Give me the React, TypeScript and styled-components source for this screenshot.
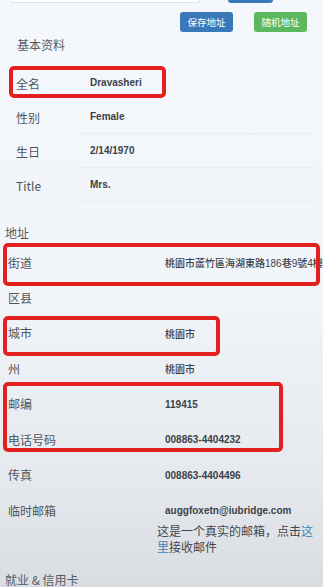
import React from "react";
import styled, { createGlobalStyle } from "styled-components";

const Global = createGlobalStyle`
  html, body { margin: 0; padding: 0; }
  body {
    width: 323px;
    height: 587px;
    overflow: hidden;
    font-family: "Liberation Sans", "Noto Sans CJK SC", sans-serif;
    background: linear-gradient(180deg, #f4f8fd 0%, #f1f5fa 50%, #e6eaee 80%, #d9dde2 100%);
  }
`;

const Page = styled.div`
  position: relative;
  width: 323px;
  height: 587px;
  overflow: hidden;
`;

const TopBar = styled.div`
  display: flex;
  align-items: flex-end;
  height: 3px;
  padding-left: 10px;
`;

const SearchInput = styled.div`
  width: 190px;
  height: 3px;
  background: #ffffff;
  border: 1px solid #dde3ea;
  border-top: none;
  border-radius: 0 0 3px 3px;
  box-sizing: border-box;
`;

const TopButton = styled.div`
  margin-left: 28px;
  width: 45px;
  height: 3px;
  background: #3a79b7;
  border-radius: 0 0 3px 3px;
`;

const ButtonRow = styled.div`
  display: flex;
  justify-content: flex-end;
  gap: 21px;
  padding: 9px 16px 0 0;
`;

const Btn = styled.button<{ $variant: "primary" | "success" }>`
  width: 53px;
  height: 20px;
  border: none;
  border-radius: 3px;
  padding: 0;
  font-family: "Noto Sans CJK SC", sans-serif;
  font-size: 9.5px;
  color: #ffffff;
  background: ${(p) => (p.$variant === "primary" ? "#3a79b8" : "#5cb85c")};
`;

const Heading = styled.div<{ $indent: number; $top: number }>`
  padding-left: ${(p) => p.$indent}px;
  margin-top: ${(p) => p.$top}px;
  font-family: "Noto Sans CJK SC", sans-serif;
  font-size: 12px;
  line-height: 16px;
  color: #555b61;
`;

const BasicTable = styled.div`
  display: flex;
  flex-direction: column;
  padding: 13px 11px 0 16px;
`;

const BasicRow = styled.div`
  display: grid;
  grid-template-columns: 64px 1fr;
  height: 34px;
  align-items: stretch;
`;

const BasicLabel = styled.div`
  display: flex;
  align-items: center;
  font-family: "Noto Sans CJK SC", sans-serif;
  font-size: 12px;
  color: #4f555b;
`;

const BasicValue = styled.div<{ $line: boolean }>`
  display: flex;
  align-items: center;
  padding-left: 10px;
  font-size: 10px;
  font-weight: bold;
  color: #3c4248;
  border-bottom: 1px solid ${(p) => (p.$line ? "#e7ecf2" : "transparent")};
`;

const AddrTable = styled.div`
  display: flex;
  flex-direction: column;
  padding: 4px 0 0 8px;
`;

const AddrRow = styled.div`
  display: grid;
  grid-template-columns: 157px 1fr;
  min-height: 35.4px;
  align-items: center;
`;

const EmailRow = styled.div`
  display: grid;
  grid-template-columns: 157px 1fr;
  align-items: start;
  padding-top: 10px;
`;

const AddrLabel = styled.div`
  font-family: "Noto Sans CJK SC", sans-serif;
  font-size: 12px;
  line-height: 16px;
  color: #4f555b;
`;

const AddrValue = styled.div<{ $cjk?: boolean }>`
  font-family: "Liberation Sans", "Noto Sans CJK TC", sans-serif;
  font-size: 10px;
  font-weight: ${(p) => (p.$cjk ? 500 : "bold")};
  color: #3c4248;
  white-space: nowrap;
  overflow: hidden;
`;

const EmailBlock = styled.div`
  display: flex;
  flex-direction: column;
  margin-left: -8px;
`;

const EmailValue = styled.div`
  padding-left: 8px;
  font-size: 10px;
  font-weight: bold;
  color: #3c4248;
  line-height: 16px;
`;

const Note = styled.div`
  margin-top: 4px;
  width: 160px;
  font-family: "Noto Sans CJK SC", sans-serif;
  font-size: 12px;
  line-height: 16px;
  color: #3f454b;
`;

const Link = styled.span`
  color: #3d86b9;
`;

const Mark = styled.div`
  position: absolute;
  border: 4px solid #e2211e;
  border-radius: 5px;
  box-sizing: border-box;
  pointer-events: none;
`;

const basic = [
  ["全名", "Dravasheri"],
  ["性别", "Female"],
  ["生日", "2/14/1970"],
  ["Title", "Mrs."],
];

const addr: [string, string, boolean][] = [
  ["街道", "桃園市蘆竹區海湖東路186巷9號4樓", true],
  ["区县", "", false],
  ["城市", "桃園市", true],
  ["州", "桃園市", true],
  ["邮编", "119415", false],
  ["电话号码", "008863-4404232", false],
  ["传真", "008863-4404496", false],
];

const marks = [
  { l: 9, t: 66, w: 157, h: 32 },
  { l: 3, t: 243, w: 317, h: 43 },
  { l: 3, t: 316, w: 217, h: 40 },
  { l: 3, t: 382, w: 280, h: 70 },
];

export default function App() {
  return (
    <Page>
      <Global />
      <TopBar>
        <SearchInput />
        <TopButton />
      </TopBar>
      <ButtonRow>
        <Btn $variant="primary">保存地址</Btn>
        <Btn $variant="success">随机地址</Btn>
      </ButtonRow>
      <Heading $indent={17} $top={5}>基本资料</Heading>
      <BasicTable>
        {basic.map(([k, v], i) => (
          <BasicRow key={k}>
            <BasicLabel>{k}</BasicLabel>
            <BasicValue $line={i > 0}>{v}</BasicValue>
          </BasicRow>
        ))}
      </BasicTable>
      <Heading $indent={5} $top={23}>地址</Heading>
      <AddrTable>
        {addr.map(([k, v, cjk]) => (
          <AddrRow key={k}>
            <AddrLabel>{k}</AddrLabel>
            <AddrValue $cjk={cjk}>{v}</AddrValue>
          </AddrRow>
        ))}
        <EmailRow>
          <AddrLabel>临时邮箱</AddrLabel>
          <EmailBlock>
            <EmailValue>auggfoxetn@iubridge.com</EmailValue>
            <Note>
              这是一个真实的邮箱，点击<Link>这里</Link>接收邮件
            </Note>
          </EmailBlock>
        </EmailRow>
      </AddrTable>
      <Heading $indent={5} $top={17}>就业 &amp; 信用卡</Heading>
      {marks.map((m, i) => (
        <Mark key={i} style={{ left: m.l, top: m.t, width: m.w, height: m.h }} />
      ))}
    </Page>
  );
}
